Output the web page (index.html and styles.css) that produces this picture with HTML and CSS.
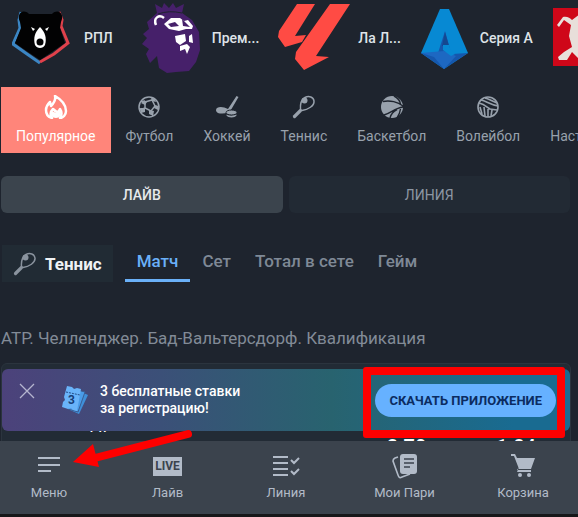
FILE: index.html
```
<!DOCTYPE html>
<html lang="ru">
<head>
<meta charset="utf-8">
<meta name="viewport" content="width=device-width, initial-scale=1">
<title>Ставки</title>
<link rel="stylesheet" href="styles.css">
</head>
<body>

<svg width="0" height="0" class="defs">
<symbol id="racket" viewBox="0 0 24 24">
<path d="M8.500 14.500C8 9 9 5 13 2.500C17 .5 21.500 2 22 6C22.500 11 16 14.500 10 15.500" fill="none" stroke="currentColor" stroke-width="1.500" stroke-linejoin="round"/>
<path d="M2.500 21.500L8.500 15.500" stroke="currentColor" stroke-width="3.200" stroke-linecap="round"/>
<circle cx="12.500" cy="5.500" r="3" fill="currentColor"/>
</symbol>
</svg>

<div class="screen">
<main class="content">

<div class="leagues">
<a href="#" class="league">
<svg width="64" height="76" viewBox="0 0 64 76">
<path d="M9 12L7 20L8 28L1 44L15 54L28 63" fill="none" stroke="#3b86c4" stroke-width="3"/>
<path d="M47 12L50 20L49 26L56 43L42 54L28 62" fill="none" stroke="#e0414b" stroke-width="3"/>
<path d="M8 22C4 14 11 8 17 14L40 14C46 8 53 14 49 22L48 28L53 43L40 52L28 60L16 52L3 43L9 28Z" fill="#020203"/>
<path d="M28 27C33 32 35 38 33 45C31 49 25 49 23 45C21 38 23 32 28 27Z" fill="#fff"/>
<circle cx="28" cy="42" r="3.500" fill="#020203"/>
<path d="M19 27l4 2-2 2zM37 27l-4 2 2 2z" fill="#fff"/>
</svg>
<span>РПЛ</span></a>
<a href="#" class="league">
<svg width="72" height="76" viewBox="0 0 72 76">
<path d="M25 13L23 4L30 8L32 3L37 8L41 3L44 8L52 4L50 13L60 20L67 32L68 50L64 62L57 71L44 72L35 73L27 68L25 56L18 63L14 54L17 49L10 44L15 38L11 34L17 29L15 22Z" fill="#46206a"/>
<path d="M26 14Q37 10 50 13" fill="none" stroke="#1e242e" stroke-width="1"/>
<path d="M24 25C21 18 27 14 32 18" fill="none" stroke="#fff" stroke-width="2.500"/>
<path d="M32 24L39 18L48 18L52 21L56 20L61 26L60 29L54 29L47 31L37 29Z" fill="#fff"/>
<path d="M36 24L43 22L47 26L39 27ZM50 19L58 27L51 26Z" fill="#46206a"/>
<path d="M43 36L53 34L54 41L48 45L44 42ZM57 36L60 34L61 43L57 42ZM48 46L55 44L58 47L55 54L53 49L48 51Z" fill="#fff"/>
</svg>
<span>Прем...</span></a>
<a href="#" class="league">
<svg width="72" height="76" viewBox="0 0 72 76">
<path d="M19 4H37L17 36L28 35L24 42L7 47L0 37L1 31ZM52 4H72L38 56L51 57L26 70L17 59L18 52Z" fill="#ff4b44"/>
</svg>
<span>Ла Л...</span></a>
<a href="#" class="league">
<svg width="52" height="76" viewBox="0 0 52 76">
<path d="M20 9H29L48 53L24 69L1 53Z" fill="#0789d3"/>
<path d="M25 31L30 49L32 54L48 53L24 69L1 53L18 53Z" fill="#1557ad"/>
<path d="M1 53L14 57L24 69L36 56L24 51Z" fill="#1d68c2"/>
<path d="M25 32L29 46H22Z" fill="#144890"/>
<path d="M30 48L35 54L31 56L23 50V45H29Z" fill="#0789d3"/>
</svg>
<span>Серия А</span></a>
<a href="#" class="league" aria-label="Бундеслига">
<svg width="58" height="76" viewBox="0 0 58 76">
<rect x="1" y="8" width="57" height="58" fill="#cf0719"/>
<path d="M5 25L11 17C15 16 18 18 20 20L28 14V60L20 52L15 60L7 60L6 57L12 52L20 47L17 36L19 25L12 20L7 27Z" fill="#e8dfda"/>
</svg></a>
</div>

<div class="sports">
<button type="button" class="sport active">
<svg width="24" height="24" viewBox="0 0 24 24"><path d="M11 1C18 5 22 11 22 16C22 20 19 23 16 23C18 20 18 17 16 14C15 16 14 17 13 17C11 16 10 15 9 14C6 17 6 20 8 23C4 22 2 19 2 15C2 11 4 9 6 7L7 11C10 8 12 5 11 1Z" fill="none" stroke="#fff" stroke-width="2.500" stroke-linejoin="round"/><path d="M8 16C10 18 14 18 16 15C18 20 16 23 12 23S6 20 8 16Z" fill="#fff"/></svg>
Популярное</button>
<button type="button" class="sport">
<svg width="24" height="24" viewBox="0 0 24 24" fill="none" stroke="currentColor" stroke-width="1.500"><circle cx="12" cy="12" r="10"/><path d="M8 7L15 5L18 11L14 16L8 13ZM8 7L4 6M15 5L16 3M18 11L22 12M14 16L16 21M8 13L3 15"/><path d="M7 5l3 2-2 3-4-2zM14 3l4 1 1 3-4-1zM17 10l4 1 0 4-4-2zM12 15l5 1-1 5-4-2zM3 13l5 0 0 4-4 1z" fill="currentColor" stroke="none"/></svg>
Футбол</button>
<button type="button" class="sport">
<svg width="24" height="24" viewBox="0 0 24 24" fill="currentColor"><path d="M21.500 1L23.500 2L16.500 14C14 18 10 19 5 18.500C1 18 0 15 2 13C5 11 9 12 13 14Z"/><ellipse cx="16.500" cy="17.500" rx="5.500" ry="2.500" stroke="#1e242e"/><path d="M11.500 19.500C13 21 19 21 21.500 19.500V20.500C20 23 13 23 11.500 20.500Z"/></svg>
Хоккей</button>
<button type="button" class="sport">
<svg width="24" height="24"><use href="#racket"/></svg>
Теннис</button>
<button type="button" class="sport">
<svg width="24" height="24" viewBox="0 0 24 24"><circle cx="12" cy="12" r="11" fill="currentColor"/><path d="M3 6.500C10 5 18 7 23 11M4 20C11 18 15 13 23 12M14 1C18 3 20 6 20.500 9M20.500 14C20 18 19 20 17 23M10 23C11 19 14 16 17 14.500" fill="none" stroke="#1e242e" stroke-width="1.400"/></svg>
Баскетбол</button>
<button type="button" class="sport">
<svg width="24" height="24" viewBox="0 0 24 24" fill="none" stroke="currentColor" stroke-width="1.600"><circle cx="12" cy="12" r="10"/><path d="M3 8C8 9 11 12 14 14L21 15M5 5C10 6 15 10 22 11M9 3C13 4 18 7 21 8M4 12L6 19M8 12L9 21M12 14L12 22M16 15L15 21"/></svg>
Волейбол</button>
<button type="button" class="sport">
<svg width="24" height="24" viewBox="0 0 24 24"></svg>
Настольный теннис</button>
</div>

<div class="modes">
<button type="button" class="mode active">ЛАЙВ</button>
<button type="button" class="mode">ЛИНИЯ</button>
</div>

<div class="markets">
<h2 class="chip"><svg width="24" height="24"><use href="#racket"/></svg>Теннис</h2>
<div class="tabs">
<button type="button" class="tab active">Матч</button>
<button type="button" class="tab">Сет</button>
<button type="button" class="tab">Тотал в сете</button>
<button type="button" class="tab">Гейм</button>
</div>
</div>

<h3 class="tourney">ATP. Челленджер. Бад-Вальтерсдорф. Квалификация</h3>

<div class="match">
<div class="team">т п</div>
<div class="odds"><span>2.70</span><span>1.84</span></div>
</div>

</main>

<aside class="promo">
<button type="button" class="close" aria-label="Закрыть"><svg width="16" height="16" viewBox="0 0 16 16"><path d="M1 1L15 15M15 1L1 15" stroke="#b5b6cf" stroke-width="1.300"/></svg></button>
<svg class="ticket" width="30" height="32" viewBox="0 0 30 32">
<path d="M15 5L28 11L19 30L10 26Z" fill="#3f8fd9"/>
<path d="M10 4L25 8L18 28L8 25Z" fill="#4a9ce8" stroke="#3a5d93"/>
<path d="M7 2L12 3L14 5L17 4L21 5L17 27L13 26L11 24L8 25L2 23L3 18L5 16L4 13Z" fill="#69b4fa"/>
<path d="M6 8L20 11" stroke="#24508a" stroke-dasharray="2 1"/>
<text x="8" y="20">3</text>
</svg>
<p>3 бесплатные ставки<br>за регистрацию!</p>
<button type="button" class="download">СКАЧАТЬ ПРИЛОЖЕНИЕ</button>
<div class="frame"></div>
</aside>

<nav class="bottom">
<a href="#"><svg width="24" height="24" viewBox="0 0 24 24" stroke="currentColor" stroke-width="2"><path d="M1 5H23M1 12H23M1 18H14"/></svg>Меню</a>
<a href="#"><b class="live">LIVE</b>Лайв</a>
<a href="#"><svg width="28" height="24" viewBox="0 0 28 24" fill="none" stroke="currentColor" stroke-width="2"><path d="M1 4H16M1 10H16M1 16H16M1 22H16M19 7L22 10L27 5M19 18L22 21L27 16"/></svg>Линия</a>
<a href="#"><svg width="26" height="26" viewBox="0 0 26 26"><path d="M6 4L3 5C1 6 1 7 1 8L6 22C7 25 8 25 10 24L18 21" fill="none" stroke="currentColor" stroke-width="1.600"/><rect x="8" y="1" width="17" height="20" rx="3" fill="currentColor"/><path d="M12 6H22M12 10H22M12 14H18" stroke="#3b434d" stroke-width="1.600"/></svg>Мои Пари</a>
<a href="#"><svg width="24" height="24" viewBox="0 0 24 24" fill="currentColor"><path d="M0 1H4L6 5H24L20 16H8L3 3H0Z"/><path d="M6 17H20V19H6L8 14Z"/><circle cx="9" cy="22" r="2"/><circle cx="18" cy="22" r="2"/></svg>Корзина</a>
<svg class="arrow" width="120" height="42" viewBox="0 0 120 42"><path d="M115 5L18 30" stroke="#fe0000" stroke-width="8" stroke-linecap="round"/><path d="M0 33L20 15L26 38Z" fill="#fe0000"/></svg>
</nav>
</div>

</body>
</html>
```
FILE: styles.css
```
* {box-sizing:border-box;}
body {margin:0;background:#1e242e;color:#dfe3e8;font-family:Roboto, "Liberation Sans", sans-serif;font-size:14px;overflow:hidden;}
button {border:0;padding:0;margin:0;background:none;color:inherit;font:inherit;cursor:pointer;}
a {color:inherit;text-decoration:none;}
h2, h3, p {margin:0;}
svg {display:block;flex:none;}
.defs {position:absolute;}

.screen {position:relative;display:flex;flex-direction:column;height:100vh;}
.content {flex:1;display:flex;flex-direction:column;min-height:0;overflow:hidden;}

.leagues {display:flex;flex:none;gap:19px;height:76px;padding-left:12px;overflow:hidden;}
.league {display:flex;flex:none;align-items:center;gap:8px;font-weight:500;white-space:nowrap;}

.sports {display:flex;flex:none;margin-top:11px;padding-left:1px;overflow:hidden;color:#98a1ac;}
.sport {display:flex;flex:none;flex-direction:column;align-items:center;gap:8px;height:66px;padding:8px 15px 0;line-height:18px;white-space:nowrap;}
.sport.active {background:#ff857a;color:#fff;}

.modes {display:flex;flex:none;gap:6px;margin-top:23px;padding:0 8px 0 1px;}
.mode {flex:1;height:37px;border-radius:6px;background:#222a34;color:#8d97a3;}
.mode.active {background:#3b444d;color:#e6e9ec;font-weight:500;}

.markets {display:flex;flex:none;gap:12px;margin-top:32px;padding-left:2px;}
.chip {display:flex;align-items:center;gap:8px;height:37px;padding:0 11px;background:#212b34;color:#f0f2f4;font-size:17px;font-weight:700;}
.chip svg {color:#8a939e;}
.tabs {display:flex;height:37px;color:#7f8996;font-size:17px;font-weight:500;}
.tab {padding:0 12px 3px;border-bottom:3px solid transparent;}
.tab.active {border-color:#6ab0f8;color:#6ab0f8;}

.tourney {flex:none;margin-top:46px;padding-left:1px;color:#828b97;font-size:17px;font-weight:400;line-height:20px;white-space:nowrap;}
.match {flex:none;display:flex;justify-content:space-between;height:120px;margin:15px 7px 0 1px;padding:53px 34px 0 86px;border:1px solid #2b343e;border-radius:6px;background:#222b35;color:#fff;}
.team {font-size:14px;font-weight:500;line-height:20px;}
.odds {display:flex;gap:70px;padding-top:20px;font-size:20px;font-weight:500;line-height:20px;}

.promo {position:absolute;left:2px;right:8px;bottom:86px;display:flex;align-items:center;height:62px;padding:0 14px 0 17px;border-radius:6px;background:linear-gradient(90deg, #4c427b, #3b5078 28%, #28636f 58%, #196b91 90%);}
.promo p {margin-left:10px;color:#fff;font-weight:500;line-height:17px;}
.close {align-self:flex-start;margin-top:14px;}
.ticket {margin-left:25px;}
.ticket text {fill:#173f78;font-size:12px;font-weight:700;}
.download {height:33px;margin-left:auto;padding:0 14px;border-radius:17px;background:#66b1ff;color:#0b2c61;font-size:13px;font-weight:700;}
.frame {position:absolute;top:-2px;right:5px;bottom:-7px;width:202px;border:8px solid #fe0000;border-radius:3px;pointer-events:none;}

.bottom {position:relative;flex:none;display:flex;justify-content:space-between;height:76px;padding:12px 15px 0 9px;border-bottom:3px solid #171719;background:#3b434d;color:#b2bbc8;font-size:13px;}
.bottom a {display:flex;flex-direction:column;align-items:center;justify-content:space-between;width:80px;height:48px;line-height:16px;}
.live {margin-top:4px;width:29px;background:#b2bbc8;color:#3b434d;font-size:12px;line-height:19px;text-align:center;}
.arrow {position:absolute;top:-12px;left:73px;pointer-events:none;}
```
